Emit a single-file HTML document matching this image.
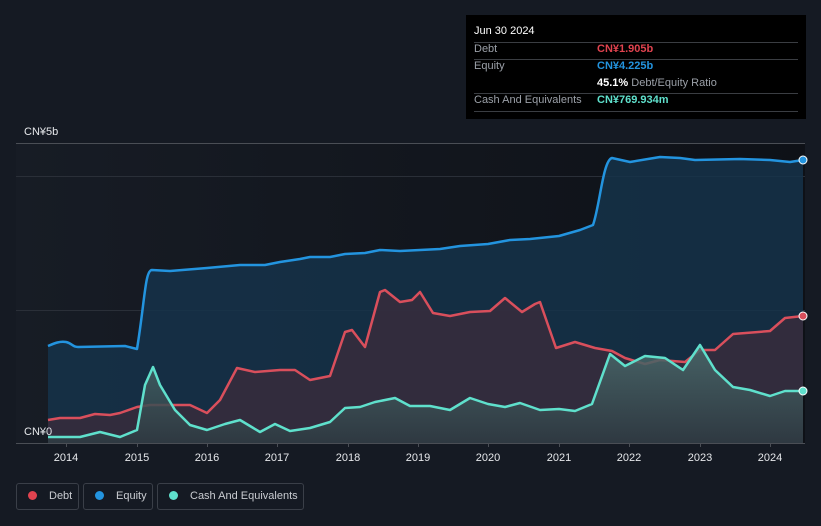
<!DOCTYPE html>
<html><head><meta charset="utf-8"><style>
html,body{margin:0;width:821px;height:526px;overflow:hidden}
body{background:#151a23;font-family:"Liberation Sans","Noto Sans CJK SC",sans-serif;position:relative}
.tt{position:absolute;left:466px;top:15px;width:340px;height:104px;background:#000;color:#fff;font-size:11px}
.tt .r{position:absolute;left:8px;width:324px;border-top:1px solid #3a3d42}
.lbl{color:#9ba0a8}
.leg{position:absolute;top:483px;height:27px;border:1px solid #3a3f48;border-radius:3px;color:#c9ccd1;font-size:11px;line-height:25px;box-sizing:border-box;white-space:nowrap}
.dot{display:inline-block;width:9px;height:9px;border-radius:50%;margin:0 12px 0 11px;vertical-align:-1px}
</style></head><body>
<svg width="821" height="526" style="position:absolute;left:0;top:0">
<defs>
<linearGradient id="bg" x1="0" x2="1" y1="0" y2="0"><stop offset="0" stop-color="#171c25"/><stop offset="1" stop-color="#0e1117"/></linearGradient>
<linearGradient id="cg" x1="0" x2="0" y1="0" y2="1"><stop offset="0" stop-color="#4a6b6c"/><stop offset="1" stop-color="#2e3b42"/></linearGradient>
</defs>
<rect x="16" y="143" width="789" height="300" fill="url(#bg)"/>
<line x1="16" y1="143.5" x2="805" y2="143.5" stroke="#4a4e55"/>
<line x1="16" y1="176.5" x2="805" y2="176.5" stroke="#2a2f38"/>
<line x1="16" y1="310.5" x2="805" y2="310.5" stroke="#2a2f38"/>
<path d="M48,346 C55,343 60,341 66,342 S72,347 78,347 L125,346 L137,349 C145,300 145,270 152,270 L170,271 L207,268 L240,265 L265,265 L280,262 L300,259 L310,257 L330,257 L345,254 L365,253 L380,250 L400,251 L420,250 L440,249 L460,246 L488,244 L510,240 L530,239 L559,236 L580,230 L593,225 C600,205 603,160 612,158 L630,162 L660,157 L680,158 L695,160 L740,159 L770,160 L790,162 L803,160 L803,443 L48,443Z" fill="#15324a" fill-opacity="0.85" stroke="none"/>
<path d="M48,346 C55,343 60,341 66,342 S72,347 78,347 L125,346 L137,349 C145,300 145,270 152,270 L170,271 L207,268 L240,265 L265,265 L280,262 L300,259 L310,257 L330,257 L345,254 L365,253 L380,250 L400,251 L420,250 L440,249 L460,246 L488,244 L510,240 L530,239 L559,236 L580,230 L593,225 C600,205 603,160 612,158 L630,162 L660,157 L680,158 L695,160 L740,159 L770,160 L790,162 L803,160" fill="none" stroke="#2394df" stroke-width="2.5" stroke-linejoin="round"/>
<path d="M48,420 L60,418 L80,418 L95,414 L110,415 L120,413 L137,407 L150,405 L190,405 L207,413 L220,400 L237,368 L255,372 L280,370 L295,370 L310,380 L330,376 L345,332 L352,330 L365,347 L380,292 L385,290 L400,302 L412,300 L420,292 L433,313 L450,316 L470,312 L490,311 L505,298 L522,312 L535,304 L540,302 L556,348 L575,342 L595,348 L612,351 L625,358 L645,364 L660,360 L685,362 L700,350 L715,350 L733,334 L770,331 L785,318 L803,316 L803,443 L48,443Z" fill="#3a2c3c" fill-opacity="0.8"/>
<path d="M48,420 L60,418 L80,418 L95,414 L110,415 L120,413 L137,407 L150,405 L190,405 L207,413 L220,400 L237,368 L255,372 L280,370 L295,370 L310,380 L330,376 L345,332 L352,330 L365,347 L380,292 L385,290 L400,302 L412,300 L420,292 L433,313 L450,316 L470,312 L490,311 L505,298 L522,312 L535,304 L540,302 L556,348 L575,342 L595,348 L612,351 L625,358 L645,364 L660,360 L685,362 L700,350 L715,350 L733,334 L770,331 L785,318 L803,316" fill="none" stroke="#d94f5c" stroke-width="2.5" stroke-linejoin="round"/>
<path d="M48,437 L80,437 L100,432 L120,437 L137,430 L145,385 L153,367 L160,385 L175,410 L190,425 L207,430 L225,424 L240,420 L260,432 L275,424 L290,431 L310,428 L330,422 L345,408 L360,407 L375,402 L395,398 L410,406 L430,406 L450,410 L470,398 L488,404 L505,407 L520,403 L540,410 L559,409 L575,411 L592,404 L610,354 L625,366 L645,356 L665,358 L683,370 L700,345 L715,370 L733,387 L750,390 L770,396 L785,391 L803,391 L803,443 L48,443Z" fill="url(#cg)" fill-opacity="0.85"/>
<path d="M48,437 L80,437 L100,432 L120,437 L137,430 L145,385 L153,367 L160,385 L175,410 L190,425 L207,430 L225,424 L240,420 L260,432 L275,424 L290,431 L310,428 L330,422 L345,408 L360,407 L375,402 L395,398 L410,406 L430,406 L450,410 L470,398 L488,404 L505,407 L520,403 L540,410 L559,409 L575,411 L592,404 L610,354 L625,366 L645,356 L665,358 L683,370 L700,345 L715,370 L733,387 L750,390 L770,396 L785,391 L803,391" fill="none" stroke="#5fe0cc" stroke-width="2.5" stroke-linejoin="round"/>
<circle cx="803" cy="160" r="4" fill="#2394df" stroke="#fff" stroke-width="1"/>
<circle cx="803" cy="316" r="4" fill="#d94f5c" stroke="#fff" stroke-width="1"/>
<circle cx="803" cy="391" r="4" fill="#5fe0cc" stroke="#fff" stroke-width="1"/>
<line x1="16" y1="443.5" x2="805" y2="443.5" stroke="#4a4e55"/>
<g stroke="#4a4e55"><line x1="66.5" y1="443" x2="66.5" y2="447"/><line x1="137.5" y1="443" x2="137.5" y2="447"/><line x1="207.5" y1="443" x2="207.5" y2="447"/><line x1="277.5" y1="443" x2="277.5" y2="447"/><line x1="348.5" y1="443" x2="348.5" y2="447"/><line x1="418.5" y1="443" x2="418.5" y2="447"/><line x1="488.5" y1="443" x2="488.5" y2="447"/><line x1="559.5" y1="443" x2="559.5" y2="447"/><line x1="629.5" y1="443" x2="629.5" y2="447"/><line x1="700.5" y1="443" x2="700.5" y2="447"/><line x1="770.5" y1="443" x2="770.5" y2="447"/></g>
<g fill="#e6e8eb" font-size="11" font-family="Liberation Sans, Noto Sans CJK SC, sans-serif" text-anchor="middle">
<text x="66" y="461">2014</text><text x="137" y="461">2015</text><text x="207" y="461">2016</text><text x="277" y="461">2017</text><text x="348" y="461">2018</text><text x="418" y="461">2019</text><text x="488" y="461">2020</text><text x="559" y="461">2021</text><text x="629" y="461">2022</text><text x="700" y="461">2023</text><text x="770" y="461">2024</text>
<text x="24" y="135" text-anchor="start">CN¥5b</text><text x="24" y="435" text-anchor="start">CN¥0</text>
</g>
</svg>
<div class="tt">
<div style="position:absolute;left:8px;top:10px">Jun 30 2024</div>
<div class="r" style="top:27px"></div>
<div class="lbl" style="position:absolute;left:8px;top:28px">Debt</div><div style="position:absolute;left:131px;top:28px;color:#e0434f;font-weight:bold">CN¥1.905b</div>
<div class="r" style="top:44px"></div>
<div class="lbl" style="position:absolute;left:8px;top:45px">Equity</div><div style="position:absolute;left:131px;top:45px;color:#2394df;font-weight:bold">CN¥4.225b</div>
<div style="position:absolute;left:131px;top:62px"><b>45.1%</b> <span class="lbl">Debt/Equity Ratio</span></div>
<div class="r" style="top:78px"></div>
<div class="lbl" style="position:absolute;left:8px;top:79px">Cash And Equivalents</div><div style="position:absolute;left:131px;top:79px;color:#5fe0cc;font-weight:bold">CN¥769.934m</div>
<div class="r" style="top:96px"></div>
</div>
<div class="leg" style="left:16px;width:63px"><span class="dot" style="background:#e0434f"></span>Debt</div>
<div class="leg" style="left:83px;width:70px"><span class="dot" style="background:#2394df"></span>Equity</div>
<div class="leg" style="left:157px;width:147px"><span class="dot" style="background:#5fe0cc"></span>Cash And Equivalents</div>
</body></html>
